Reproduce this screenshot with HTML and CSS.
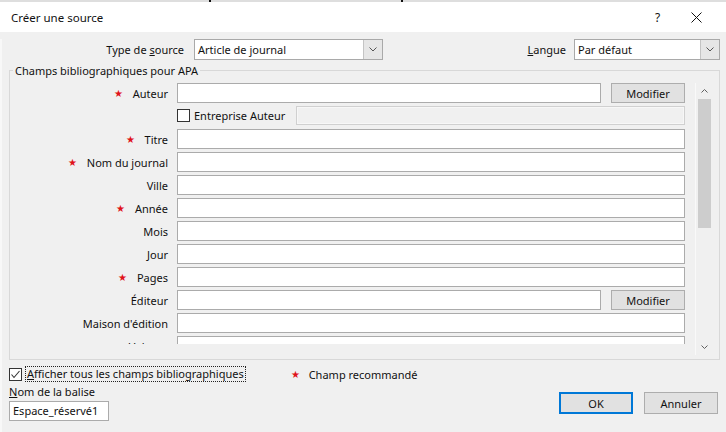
FILE: index.html
```html
<!DOCTYPE html>
<html lang="fr">
<head>
<meta charset="utf-8">
<title>Créer une source</title>
<link rel="stylesheet" href="styles.css">
</head>
<body>
<div class="backdoc"><span class="mark m1"></span><span class="mark m2"></span></div>
<div class="titlebar">
  <span class="title">Créer une source</span>
  <span class="help">?</span>
  <span class="close"><svg width="11" height="11" viewBox="0 0 11 11"><path d="M0.5 0.5 L10.5 10.5 M10.5 0.5 L0.5 10.5" stroke="#111" stroke-width="1" fill="none"/></svg></span>
</div>
<div class="dialog">
  <div class="toprow">
    <span class="lbl-type">Type de <u>s</u>ource</span>
    <div class="combo combo-type"><span class="combo-text">Article de journal</span><span class="combo-btn"><svg width="8" height="5" viewBox="0 0 8 5"><path d="M0.5 0.5 L4 4 L7.5 0.5" stroke="#555" fill="none"/></svg></span></div>
    <span class="spacer"></span>
    <span class="lbl-lang"><u>L</u>angue</span>
    <div class="combo combo-lang"><span class="combo-text">Par défaut</span><span class="combo-btn"><svg width="8" height="5" viewBox="0 0 8 5"><path d="M0.5 0.5 L4 4 L7.5 0.5" stroke="#555" fill="none"/></svg></span></div>
  </div>

  <fieldset class="group">
    <legend>Champs bibliographiques pour APA</legend>
    <div class="pane">
      <div class="rows">
        <div class="lbl"><span class="star">★</span>Auteur</div>
        <div class="field-mod"><div class="input"></div><div class="btn">Modifier</div></div>

        <div class="lbl"></div>
        <div class="corp"><span class="cb"></span><span class="corp-text">Entreprise Auteur</span><div class="input disabled"></div></div>

        <div class="lbl"><span class="star">★</span>Titre</div>
        <div class="input"></div>

        <div class="lbl"><span class="star">★</span>Nom du journal</div>
        <div class="input"></div>

        <div class="lbl">Ville</div>
        <div class="input"></div>

        <div class="lbl"><span class="star">★</span>Année</div>
        <div class="input"></div>

        <div class="lbl">Mois</div>
        <div class="input"></div>

        <div class="lbl">Jour</div>
        <div class="input"></div>

        <div class="lbl"><span class="star">★</span>Pages</div>
        <div class="input"></div>

        <div class="lbl">Éditeur</div>
        <div class="field-mod"><div class="input"></div><div class="btn">Modifier</div></div>

        <div class="lbl">Maison d'édition</div>
        <div class="input"></div>

        <div class="lbl">Volume</div>
        <div class="input"></div>
      </div>
      <div class="scrollbar">
        <span class="arrow"><svg width="7" height="4" viewBox="0 0 7 4"><path d="M0.5 3.5 L3.5 0.5 L6.5 3.5" stroke="#606060" fill="none"/></svg></span>
        <span class="thumb"></span>
        <span class="track"></span>
        <span class="arrow"><svg width="7" height="4" viewBox="0 0 7 4"><path d="M0.5 0.5 L3.5 3.5 L6.5 0.5" stroke="#606060" fill="none"/></svg></span>
      </div>
    </div>
  </fieldset>

  <div class="bottom">
    <div class="brow1">
      <span class="cb checked"><svg width="11" height="11" viewBox="0 0 11 11"><path d="M1.5 5.5 L4 8.5 L9.5 2" stroke="#333" stroke-width="1.1" fill="none"/></svg></span>
      <span class="showall"><u>A</u>fficher tous les champs bibliographiques</span>
      <span class="note"><span class="star">★</span>Champ recommandé</span>
    </div>
    <div class="brow2">
      <div class="tag">
        <div class="tag-lbl"><u>N</u>om de la balise</div>
        <div class="input tag-input">Espace_réservé1</div>
      </div>
      <div class="buttons">
        <div class="btn big ok">OK</div>
        <div class="btn big">Annuler</div>
      </div>
    </div>
  </div>
</div>
</body>
</html>
```
FILE: styles.css
```css
* { box-sizing: border-box; }
html, body { margin: 0; padding: 0; }
body {
  width: 726px;
  height: 432px;
  overflow: hidden;
  background: #f0f0f0;
  font-family: "Noto Sans", "Open Sans", sans-serif;
  font-size: 11px;
  color: #111;
}
u { text-decoration: underline; text-underline-offset: 1px; }

.backdoc {
  height: 2px;
  background: #dedede;
  display: flex;
}
.mark { width: 2px; height: 2px; background: #111; }
.m1 { margin-left: 209px; }
.m2 { margin-left: 190px; }

.titlebar {
  height: 30px;
  background: #fff;
  display: flex;
  align-items: center;
  padding-left: 11px;
}
.title { font-size: 11.5px; flex: 1; }
.help { font-size: 12px; width: 36px; }
.close { width: 35px; display: flex; align-items: center; }

.dialog {
  border-left: 2px solid #f8f8f8;
  height: 400px;
}

.toprow {
  display: flex;
  align-items: center;
  margin-top: 7px;
  height: 21px;
  padding-right: 6px;
}
.lbl-type { width: 182px; text-align: right; margin-right: 10px; }
.spacer { flex: 1; }
.lbl-lang { margin-right: 8px; }
.combo {
  height: 21px;
  border: 1px solid #a9a9a9;
  background: #fff;
  display: flex;
  align-items: stretch;
}
.combo-type { width: 189px; }
.combo-lang { width: 146px; }
.combo-text { flex: 1; padding-left: 3px; line-height: 19px; white-space: nowrap; }
.combo-btn {
  width: 19px;
  background: #e6e6e6;
  border-left: 1px solid #c4c4c4;
  display: flex;
  align-items: center;
  justify-content: center;
}

.group {
  margin: 3px 6px 0 7px;
  padding: 0;
  border: 1px solid #d8d8d8;
  height: 297px;
  min-width: 0;
}
.group legend {
  padding: 0 2px;
  margin-left: 3px;
  line-height: 15px;
}
.pane {
  display: flex;
  margin-top: 5px;
  height: 272px;
}
.rows {
  display: grid;
  grid-template-columns: 158px 508px;
  column-gap: 9px;
  row-gap: 3px;
  grid-auto-rows: 20px;
  height: 261px;
  overflow: hidden;
  align-self: flex-start;
}
.lbl {
  display: flex;
  align-items: center;
  justify-content: flex-end;
  white-space: nowrap;
}
.star { color: #e0121a; font-size: 10px; margin-right: 10px; }
.input {
  height: 20px;
  border: 1px solid #ababab;
  background: #fff;
}
.field-mod { display: flex; gap: 10px; }
.field-mod .input { flex: 1; }
.btn {
  background: #e1e1e1;
  border: 1px solid #adadad;
  display: flex;
  align-items: center;
  justify-content: center;
}
.field-mod .btn { width: 74px; height: 20px; }
.corp { display: flex; align-items: center; height: 19px; }
.cb {
  width: 13px;
  height: 13px;
  border: 1px solid #333;
  background: #fff;
  display: inline-flex;
  align-items: center;
  justify-content: center;
  flex: none;
}
.corp-text { margin-left: 4px; flex: 1; }
.input.disabled {
  width: 389px;
  height: 19px;
  background: #f0f0f0;
  border-color: #d0d0d0;
  box-shadow: inset 0 0 0 1px #f7f7f7;
}

.scrollbar {
  margin-left: 10px;
  width: 17px;
  display: flex;
  flex-direction: column;
  align-items: center;
  border-left: 1px solid #f9f9f9;
}
.arrow { height: 16px; display: flex; align-items: center; justify-content: center; flex: none; }
.thumb { width: 13px; height: 129px; background: #cdcdcd; flex: none; }
.track { flex: 1; }

.bottom { padding: 6px 7px 0 7px; }
.brow1 { display: flex; align-items: center; height: 16px; }
.showall {
  margin-left: 3px;
  border: 1px dotted #222;
  padding: 0 1px 0 1px;
  line-height: 14px;
}
.note { margin-left: 45px; display: flex; align-items: center; }
.note .star { margin-right: 9px; }
.brow2 { display: flex; justify-content: space-between; }
.tag-lbl { line-height: 15px; margin-top: 2px; }
.tag-input {
  width: 100px;
  margin-top: 2px;
  padding-left: 3px;
  line-height: 18px;
  white-space: nowrap;
}
.buttons { display: flex; gap: 11px; margin-top: 10px; margin-right: 1px; }
.btn.big { width: 74px; height: 22px; }
.btn.ok { border: 2px solid #0078d7; }
```
